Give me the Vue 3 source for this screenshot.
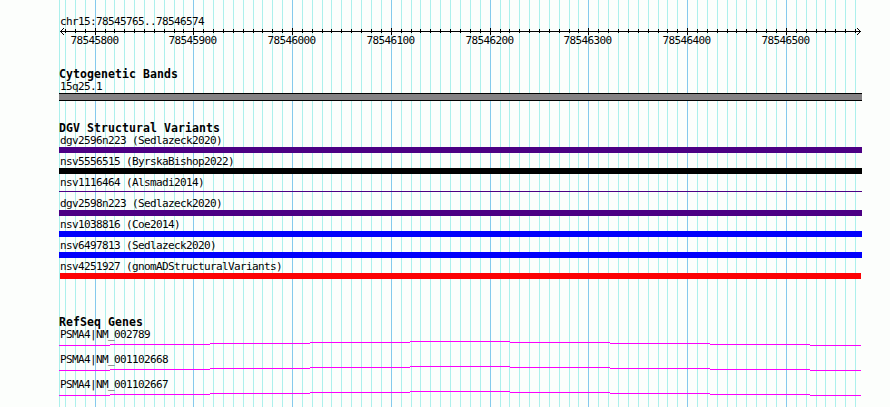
<template>
  <div class="browser-panel">
    <svg class="grid" width="890" height="407" shape-rendering="crispEdges">
      <rect v-for="line in gridLines" :key="line.x" :x="line.x" y="0" width="1" height="407" :class="line.major ? 'major' : 'minor'" />
    </svg>

    <div class="tracks">
      <!-- scale -->
      <div class="label region">chr15:78545765..78546574</div>
      <svg class="ruler" width="803" height="9" shape-rendering="crispEdges">
        <rect x="1" y="4" width="801" height="1" />
        <rect v-for="line in ticks" :key="line.x" :x="line.x - 59" :y="line.major ? 1 : 2" width="1" :height="line.major ? 7 : 4" />
        <path d="M1 4h1v1h-1zM2 3h1v3h-1zM3 2h1v1h-1zM3 6h1v1h-1zM4 1h1v1h-1zM4 7h1v1h-1z" />
        <path d="M801 4h1v1h-1zM800 3h1v3h-1zM799 2h1v1h-1zM799 6h1v1h-1zM798 1h1v1h-1zM798 7h1v1h-1z" />
      </svg>
      <svg class="scale-labels" width="803" height="13">
        <text v-for="line in majors" :key="line.x" :x="line.x - 83.5" y="8">{{ line.name }}</text>
      </svg>

      <!-- cytobands -->
      <div class="title cyto-title">Cytogenetic Bands</div>
      <div class="label">15q25.1</div>
      <div class="band"></div>

      <!-- structural variants -->
      <div class="title dgv-title">DGV Structural Variants</div>
      <div v-for="v in variants" :key="v.name" class="variant">
        <div class="label">{{ v.name }}</div>
        <div class="bar" :class="v.type"></div>
      </div>

      <!-- genes -->
      <div class="title gene-title">RefSeq Genes</div>
      <div v-for="gene in genes" :key="gene" class="gene">
        <div class="label">{{ gene }}</div>
        <svg class="intron" width="803" height="5" shape-rendering="crispEdges">
          <rect v-for="s in introns" :key="s.x" :x="s.x" :y="s.y" :width="s.width" height="1" />
        </svg>
      </div>
    </div>
  </div>
</template>

<script setup>
// the lines are 10px apart, with a 9px step where the scale rounds down
const shortSteps = [114, 183, 262, 331, 420, 509, 578, 667, 736, 825]
const ticks = []
let x = 65
for (let pos = 78545770; pos < 78546574; pos += 10) {
  ticks.push({ x, name: String(pos), major: pos % 100 === 0 })
  x += shortSteps.includes(x + 9) ? 9 : 10
}
const gridLines = [{ x: 59, major: false }, ...ticks]
const majors = ticks.filter(t => t.major)

const variants = [
  { name: 'dgv2596n223 (Sedlazeck2020)', type: 'complex' },
  { name: 'nsv5556515 (ByrskaBishop2022)', type: 'other' },
  { name: 'nsv1116464 (Alsmadi2014)', type: 'thin' },
  { name: 'dgv2598n223 (Sedlazeck2020)', type: 'complex' },
  { name: 'nsv1038816 (Coe2014)', type: 'gain' },
  { name: 'nsv6497813 (Sedlazeck2020)', type: 'gain' },
  { name: 'nsv4251927 (gnomADStructuralVariants)', type: 'loss' }
]

const genes = ['PSMA4|NM_002789', 'PSMA4|NM_001102668', 'PSMA4|NM_001102667']

const introns = [
  { x: 0, y: 4, width: 51 },
  { x: 51, y: 3, width: 100 },
  { x: 151, y: 2, width: 100 },
  { x: 251, y: 1, width: 100 },
  { x: 351, y: 0, width: 100 },
  { x: 451, y: 1, width: 100 },
  { x: 551, y: 2, width: 100 },
  { x: 651, y: 3, width: 100 },
  { x: 751, y: 4, width: 51 }
]
</script>

<style scoped>
.browser-panel {
  position: relative;
  width: 890px;
  height: 407px;
  overflow: hidden;
  background: #fcfefc;
  color: #000;
}

.grid {
  position: absolute;
  top: 0;
  left: 0;
}

.minor {
  fill: #acf0ec;
}

.major {
  fill: #84caec;
}

.tracks {
  position: relative;
  width: 803px;
  padding: 15px 0 0 59px;
}

.tracks svg {
  display: block;
}

.label,
.scale-labels text {
  font-family: "DejaVu Sans Mono", monospace;
  font-size: 11px;
  letter-spacing: -0.622px;
}

.label {
  height: 12px;
  line-height: 14px;
  padding-left: 1px;
  white-space: pre;
}

.title {
  height: 12px;
  line-height: 12px;
  font-family: "DejaVu Sans Mono", monospace;
  font-size: 11.5px;
  font-weight: bold;
  letter-spacing: 0.077px;
  white-space: pre;
}

.tracks .scale-labels {
  overflow: visible;
}

.cyto-title {
  margin-top: 19px;
}

.band {
  box-sizing: border-box;
  height: 8px;
  margin-top: 1px;
  background: #848284;
  border-top: 1px solid #000;
  border-bottom: 1px solid #000;
}

.dgv-title {
  margin-top: 21px;
}

.variant {
  height: 21px;
}

.bar {
  height: 6px;
  margin-top: 1px;
}

.complex {
  background: #4c0084;
}

.other {
  background: #000;
}

.thin {
  height: 1px;
  margin-top: 3px;
  background: #4c0084;
}

.gain {
  background: #0000fc;
}

.loss {
  margin: 1px 1px 0;
  background: #fc0204;
}

.gene-title {
  margin-top: 35px;
}

.gene {
  height: 25px;
}

.intron {
  margin-top: 1px;
  fill: #fc00fc;
}
</style>
